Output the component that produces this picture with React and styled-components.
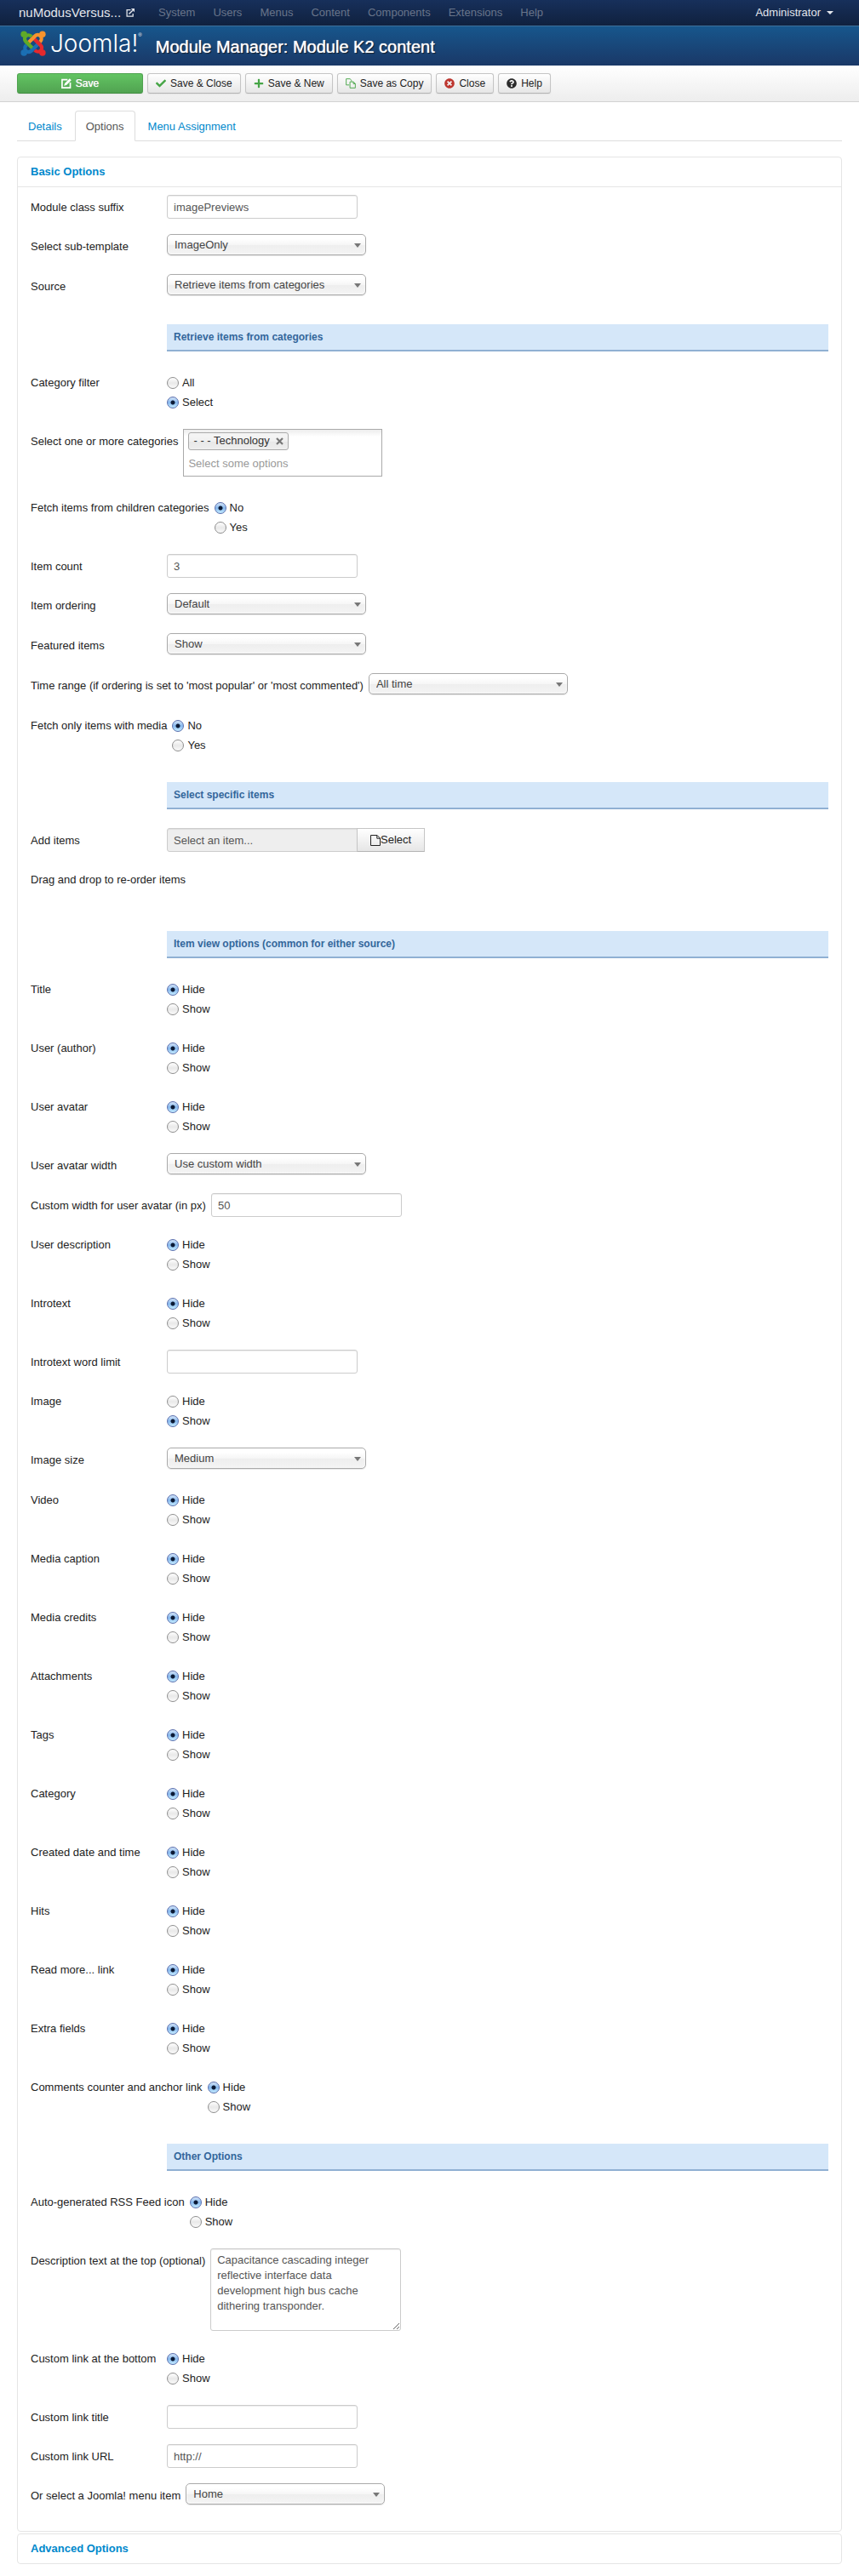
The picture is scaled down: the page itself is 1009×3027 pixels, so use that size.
import React, { useId, useState } from "react";
import styled, { createGlobalStyle, css } from "styled-components";
import {
  FaCheck,
  FaPlus,
  FaQuestionCircle,
  FaTimesCircle,
} from "react-icons/fa";

const GlobalStyle = createGlobalStyle`
  *, *::before, *::after {
    box-sizing: border-box;
  }
  body {
    margin: 0;
    background: #fff;
    color: #222;
    font-family: "Helvetica Neue", "Liberation Sans", Arial, sans-serif;
    font-size: 13px;
    line-height: 18px;
  }
  button, input, select, textarea {
    font: inherit;
    margin: 0;
  }
`;

const SHOW_HIDE = ["Hide", "Show"];
const NO_YES = ["No", "Yes"];

const menu = [
  "System",
  "Users",
  "Menus",
  "Content",
  "Components",
  "Extensions",
  "Help",
];

const fields = [
  { type: "text", label: "Module class suffix", value: "imagePreviews" },
  { type: "select", label: "Select sub-template", value: "ImageOnly" },
  { type: "select", label: "Source", value: "Retrieve items from categories" },
  { type: "header", label: "Retrieve items from categories" },
  {
    type: "radio",
    label: "Category filter",
    options: ["All", "Select"],
    value: "Select",
  },
  {
    type: "tags",
    label: "Select one or more categories",
    value: "- - - Technology",
  },
  {
    type: "radio",
    label: "Fetch items from children categories",
    options: NO_YES,
    value: "No",
  },
  { type: "text", label: "Item count", value: "3" },
  { type: "select", label: "Item ordering", value: "Default" },
  { type: "select", label: "Featured items", value: "Show" },
  {
    type: "select",
    label: "Time range (if ordering is set to 'most popular' or 'most commented')",
    value: "All time",
  },
  {
    type: "radio",
    label: "Fetch only items with media",
    options: NO_YES,
    value: "No",
  },
  { type: "header", label: "Select specific items" },
  { type: "picker", label: "Add items", value: "Select an item..." },
  { type: "note", label: "Drag and drop to re-order items" },
  { type: "header", label: "Item view options (common for either source)" },
  { type: "radio", label: "Title", value: "Hide" },
  { type: "radio", label: "User (author)", value: "Hide" },
  { type: "radio", label: "User avatar", value: "Hide" },
  { type: "select", label: "User avatar width", value: "Use custom width" },
  { type: "text", label: "Custom width for user avatar (in px)", value: "50" },
  { type: "radio", label: "User description", value: "Hide" },
  { type: "radio", label: "Introtext", value: "Hide" },
  { type: "text", label: "Introtext word limit", value: "" },
  { type: "radio", label: "Image", value: "Show" },
  { type: "select", label: "Image size", value: "Medium" },
  { type: "radio", label: "Video", value: "Hide" },
  { type: "radio", label: "Media caption", value: "Hide" },
  { type: "radio", label: "Media credits", value: "Hide" },
  { type: "radio", label: "Attachments", value: "Hide" },
  { type: "radio", label: "Tags", value: "Hide" },
  { type: "radio", label: "Category", value: "Hide" },
  { type: "radio", label: "Created date and time", value: "Hide" },
  { type: "radio", label: "Hits", value: "Hide" },
  { type: "radio", label: "Read more... link", value: "Hide" },
  { type: "radio", label: "Extra fields", value: "Hide" },
  { type: "radio", label: "Comments counter and anchor link", value: "Hide" },
  { type: "header", label: "Other Options" },
  { type: "radio", label: "Auto-generated RSS Feed icon", value: "Hide" },
  {
    type: "textarea",
    label: "Description text at the top (optional)",
    value:
      "Capacitance cascading integer reflective interface data development high bus cache dithering transponder.",
  },
  { type: "radio", label: "Custom link at the bottom", value: "Hide" },
  { type: "text", label: "Custom link title", value: "" },
  { type: "text", label: "Custom link URL", value: "http://" },
  { type: "select", label: "Or select a Joomla! menu item", value: "Home" },
];

// one arm of the logo, the other three are rotations of it
const ARM = "M10.6 5.6 C8.8 3.9 6.4 3.8 5 5.2 C3.6 6.6 3.6 8.8 5.1 10.3 L11 16.2";
const arms = [
  { color: "#1b6fb4", angle: 270 },
  { color: "#e6292d", angle: 180 },
  { color: "#f7942d", angle: 90 },
  { color: "#5faa28", angle: 0 },
];

function JoomlaMark() {
  return (
    <svg width="30" height="30" viewBox="0 0 24 24" aria-hidden="true">
      {arms.map(({ color, angle }) => (
        <g key={color} transform={`rotate(${angle} 12 12)`}>
          <circle cx="3.3" cy="3.3" r="3" fill={color} />
          <path d={ARM} fill="none" stroke={color} strokeWidth="3.4" />
        </g>
      ))}
    </svg>
  );
}

function OutIcon() {
  return (
    <svg width="10" height="10" viewBox="0 0 11 11" fill="none" aria-hidden="true">
      <path d="M6 1.8H1.2V10H9V6.5" stroke="currentColor" strokeWidth="1.4" />
      <path d="M3.8 7.2L8.6 2.4" stroke="currentColor" strokeWidth="1.6" />
      <path d="M6.4 0H11V4.6Z" fill="currentColor" />
    </svg>
  );
}

function EditIcon() {
  return (
    <svg width="13" height="13" viewBox="0 0 13 13" aria-hidden="true">
      <path
        d="M8 1.7H1V12H11.4V5.4"
        fill="none"
        stroke="currentColor"
        strokeWidth="1.8"
      />
      <path d="M4.4 6.4L10.6 0.2L12.8 2.4L6.6 8.6L3.4 9.6Z" fill="currentColor" />
    </svg>
  );
}

function CopyIcon() {
  return (
    <svg width="13" height="13" viewBox="0 0 13 13" fill="none" aria-hidden="true">
      <path
        d="M4.5 8.5H0.7V0.7H5.5L7.5 2.7V4M5.5 4.5H10L12.3 6.8V12.3H5.5ZM9.8 4.5V7H12.3"
        stroke="currentColor"
      />
    </svg>
  );
}

function FileIcon() {
  return (
    <svg width="12" height="13" viewBox="0 0 12 13" fill="none" aria-hidden="true">
      <path
        d="M0.5 0.5H8L11.5 4V12.5H0.5ZM7.8 0.5V4.2H11.5"
        stroke="currentColor"
      />
    </svg>
  );
}

function RadioField({ labelId, options = SHOW_HIDE, value }) {
  const [selected, setSelected] = useState(value);
  return (
    <RadioGroup role="radiogroup" aria-labelledby={labelId}>
      {options.map((option) => (
        <RadioLabel key={option}>
          <Radio
            type="radio"
            name={labelId}
            checked={selected === option}
            onChange={() => setSelected(option)}
          />
          {option}
        </RadioLabel>
      ))}
    </RadioGroup>
  );
}

function Control({ field, id, labelId }) {
  const { type, value, options } = field;
  switch (type) {
    case "text":
      return <TextInput id={id} type="text" defaultValue={value} />;
    case "select":
      return (
        <SelectWrap>
          <Select id={id} defaultValue={value}>
            <option>{value}</option>
          </Select>
        </SelectWrap>
      );
    case "radio":
      return <RadioField labelId={labelId} options={options} value={value} />;
    case "tags":
      return (
        <TagBox>
          <Tag>
            {value}
            <TagRemove type="button" aria-label="Remove">
              <svg width="9" height="9" viewBox="0 0 9 9" aria-hidden="true">
                <path d="M1 1L8 8M8 1L1 8" stroke="#777" strokeWidth="2.2" />
              </svg>
            </TagRemove>
          </Tag>
          <TagInput id={id} type="text" placeholder="Select some options" />
        </TagBox>
      );
    case "picker":
      return (
        <Picker>
          <TextInput id={id} type="text" defaultValue={value} disabled $joined />
          <PickerButton type="button">
            <FileIcon />
            Select
          </PickerButton>
        </Picker>
      );
    case "textarea":
      return <TextArea id={id} defaultValue={value} />;
    default:
      return null;
  }
}

function Field({ field }) {
  const id = useId();
  const labelId = `${id}label`;

  if (field.type === "header") {
    return <SectionHeader>{field.label}</SectionHeader>;
  }
  const plain = field.type === "radio" || field.type === "note";
  return (
    <Group $note={field.type === "note"}>
      <Label
        as={plain ? "span" : "label"}
        id={labelId}
        htmlFor={plain ? undefined : id}
      >
        {field.label}
      </Label>
      <Control field={field} id={id} labelId={labelId} />
    </Group>
  );
}

function App() {
  return (
    <>
      <GlobalStyle />
      <Navbar>
        <Brand href="#">
          nuModusVersus... <OutIcon />
        </Brand>
        <Menu>
          {menu.map((item) => (
            <MenuLink href="#" key={item}>
              {item}
            </MenuLink>
          ))}
        </Menu>
        <UserButton type="button">
          Administrator
          <Caret />
        </UserButton>
      </Navbar>
      <Header>
        <Logo href="#">
          <JoomlaMark />
          <Wordmark>Joomla!</Wordmark>
          <Registered>®</Registered>
        </Logo>
        <Title>Module Manager: Module K2 content</Title>
      </Header>
      <Toolbar>
        <Button type="button" $primary>
          <EditIcon />
          Save
        </Button>
        <Button type="button" $icon="#46a546">
          <FaCheck />
          Save & Close
        </Button>
        <Button type="button" $icon="#46a546">
          <FaPlus />
          Save & New
        </Button>
        <Button type="button" $icon="#46a546">
          <CopyIcon />
          Save as Copy
        </Button>
        <Button type="button" $icon="#bd362f">
          <FaTimesCircle />
          Close
        </Button>
        <Button type="button" $icon="#2b2b2b">
          <FaQuestionCircle />
          Help
        </Button>
      </Toolbar>
      <Content>
        <Tabs>
          <Tab href="#">Details</Tab>
          <Tab href="#" $active>
            Options
          </Tab>
          <Tab href="#">Menu Assignment</Tab>
        </Tabs>
        <Panel>
          <PanelToggle href="#">Basic Options</PanelToggle>
          <PanelBody>
            {fields.map((field, i) => (
              <Field field={field} key={i} />
            ))}
          </PanelBody>
        </Panel>
        <Panel>
          <PanelToggle href="#">Advanced Options</PanelToggle>
        </Panel>
      </Content>
    </>
  );
}

const Navbar = styled.nav`
  display: flex;
  align-items: center;
  height: 30px;
  padding: 0 20px 0 22px;
  background: linear-gradient(#17305b, #10213e);
`;

const Brand = styled.a`
  display: flex;
  align-items: center;
  gap: 6px;
  color: #e3e6ec;
  font-size: 15px;
  text-decoration: none;
`;

const Menu = styled.div`
  display: flex;
  gap: 21px;
  margin-left: 28px;
`;

const MenuLink = styled.a`
  color: #69758a;
  text-decoration: none;
`;

const UserButton = styled.button`
  display: flex;
  align-items: center;
  gap: 7px;
  margin-left: auto;
  padding: 0 10px 0 0;
  border: 0;
  background: none;
  color: #e3e6ec;
`;

const Caret = styled.span`
  border: 4px solid transparent;
  border-top-color: currentColor;
  border-bottom: 0;
`;

const Header = styled.header`
  display: flex;
  align-items: center;
  gap: 16px;
  height: 47px;
  padding: 0 24px;
  border-top: 1px solid #3f7099;
  background: linear-gradient(#17568c, #1a3867);
`;

const Logo = styled.a`
  display: flex;
  align-items: center;
  height: 32px;
  margin-bottom: 6px;
  color: #fff;
  text-decoration: none;
`;

const Wordmark = styled.span`
  margin-left: 5px;
  font-family: Inter, "Liberation Sans", sans-serif;
  font-size: 28px;
  font-weight: 300;
  line-height: 32px;
`;

const Registered = styled.span`
  align-self: flex-start;
  font-size: 6px;
  line-height: 12px;
`;

const Title = styled.h1`
  margin: 2px 0 0;
  color: #fff;
  font-size: 20px;
  font-weight: 500;
  line-height: 24px;
  text-shadow: 0 0 1px #fff, 1px 1px 1px rgba(0, 0, 0, 0.8);
`;

const Toolbar = styled.div`
  display: flex;
  gap: 5px;
  padding: 9px 20px;
  border-bottom: 1px solid #d2d2d2;
  background: linear-gradient(#fff, #ededed);
`;

const Button = styled.button`
  display: flex;
  align-items: center;
  justify-content: center;
  gap: 5px;
  height: 24px;
  padding: 0 9px;
  border: 1px solid #c5c5c5;
  border-bottom-color: #b3b3b3;
  border-radius: 3px;
  background: linear-gradient(#fff, #e6e6e6);
  box-shadow: 0 1px 2px rgba(0, 0, 0, 0.05);
  color: #222;
  font-size: 12px;

  svg {
    width: 12px;
    height: 12px;
    color: ${(props) => props.$icon};
  }

  ${(props) =>
    props.$primary &&
    css`
      width: 148px;
      border-color: #4ea24e #4ea24e #3f8d3f;
      background: linear-gradient(#62c462, #51a351);
      color: #fff;
      text-shadow: 0 0 1px #fff, 0 -1px 0 rgba(0, 0, 0, 0.25);
    `}
`;

const Content = styled.main`
  padding: 10px 20px;
`;

const Tabs = styled.div`
  display: flex;
  gap: 2px;
  margin-bottom: 18px;
  border-bottom: 1px solid #ddd;
`;

const Tab = styled.a`
  margin-bottom: -1px;
  padding: 9px 12px 7px;
  border: 1px solid transparent;
  border-radius: 4px 4px 0 0;
  color: #08c;
  text-decoration: none;

  ${(props) =>
    props.$active &&
    css`
      border-color: #ddd #ddd #fff;
      background: #fff;
      color: #555;
    `}
`;

const Panel = styled.section`
  margin-bottom: 2px;
  border: 1px solid #e5e5e5;
  border-radius: 4px;
`;

const PanelToggle = styled.a`
  display: block;
  padding: 8px 15px;
  color: #08c;
  font-weight: bold;
  text-decoration: none;
`;

const PanelBody = styled.div`
  display: flex;
  flex-direction: column;
  gap: 18px;
  padding: 9px 15px 27px;
  border-top: 1px solid #e5e5e5;
`;

const Group = styled.div`
  display: flex;
  align-items: flex-start;
  min-height: ${(props) => (props.$note ? "45px" : "28px")};
`;

const Label = styled.label`
  min-width: 160px;
  padding: 6px 6px 0 0;
`;

const SectionHeader = styled.h2`
  margin: 12px 0 4px 160px;
  padding: 6px 8px;
  border-bottom: 2px solid #90b0d3;
  background: #d5e7f9;
  color: #33669b;
  font-size: 12px;
  line-height: 18px;
`;

const inputStyles = css`
  width: 224px;
  padding: 4px 7px;
  border: 1px solid #ccc;
  border-radius: 3px;
  background: #fff;
  box-shadow: inset 0 1px 1px rgba(0, 0, 0, 0.075);
  color: #555;
`;

const TextInput = styled.input`
  ${inputStyles}
  height: 28px;

  ${(props) =>
    props.$joined &&
    css`
      border-radius: 3px 0 0 3px;
      background: #eee;
    `}
`;

const TextArea = styled.textarea`
  ${inputStyles}
  display: block;
  height: 97px;
  overflow: auto;
`;

const SelectWrap = styled.div`
  position: relative;
  width: 234px;
  height: 29px;

  &::after {
    content: "";
    position: absolute;
    top: 11px;
    right: 6px;
    border: 4px solid transparent;
    border-top: 5px solid #777;
    border-bottom: 0;
    pointer-events: none;
  }
`;

const Select = styled.select`
  display: block;
  width: 100%;
  height: 25px;
  padding: 0 24px 0 8px;
  border: 1px solid #aaa;
  border-radius: 5px;
  appearance: none;
  background: linear-gradient(#fff 20%, #f6f6f6 50%, #eee 52%, #f4f4f4 100%);
  box-shadow: inset 0 0 3px #fff, 0 1px 1px rgba(0, 0, 0, 0.1);
  color: #444;
`;

const RadioGroup = styled.div`
  padding: 1px 0 4px;
`;

const RadioLabel = styled.label`
  display: flex;
  align-items: center;
  gap: 4px;
  padding-top: 5px;
`;

const Radio = styled.input`
  width: 14px;
  height: 14px;
  border: 1px solid #8e8e8e;
  border-radius: 50%;
  appearance: none;
  background: linear-gradient(#fff, #e9e9e9 50%, #fafafa);

  &:checked {
    border-color: #5a6fae;
    background: radial-gradient(circle, #0b1a35 2px, transparent 3px),
      linear-gradient(#d3e4f8, #86b8ee 50%, #c4ecff);
  }
`;

const TagBox = styled.div`
  display: flex;
  flex-direction: column;
  align-items: flex-start;
  width: 234px;
  height: 56px;
  margin-bottom: 4px;
  padding: 3px 5px;
  border: 1px solid #aaa;
  background: linear-gradient(#eee 1%, #fff 15%);
`;

const Tag = styled.span`
  display: flex;
  align-items: center;
  gap: 7px;
  height: 21px;
  padding: 0 5px;
  border: 1px solid #aaa;
  border-radius: 3px;
  background: linear-gradient(#f4f4f4 20%, #f0f0f0 50%, #e8e8e8 52%, #eee);
  color: #333;
`;

const TagRemove = styled.button`
  display: flex;
  padding: 0;
  border: 0;
  background: none;
`;

const TagInput = styled.input`
  width: 100%;
  height: 28px;
  padding: 4px 0 0;
  border: 0;
  background: none;

  &::placeholder {
    color: #999;
  }
`;

const Picker = styled.div`
  display: flex;
`;

const PickerButton = styled.button`
  display: flex;
  align-items: center;
  height: 28px;
  margin-left: -1px;
  padding: 0 15px;
  border: 1px solid #c5c5c5;
  border-bottom-color: #b3b3b3;
  background: linear-gradient(#fff, #e6e6e6);
  color: #222;
`;

export default App;
